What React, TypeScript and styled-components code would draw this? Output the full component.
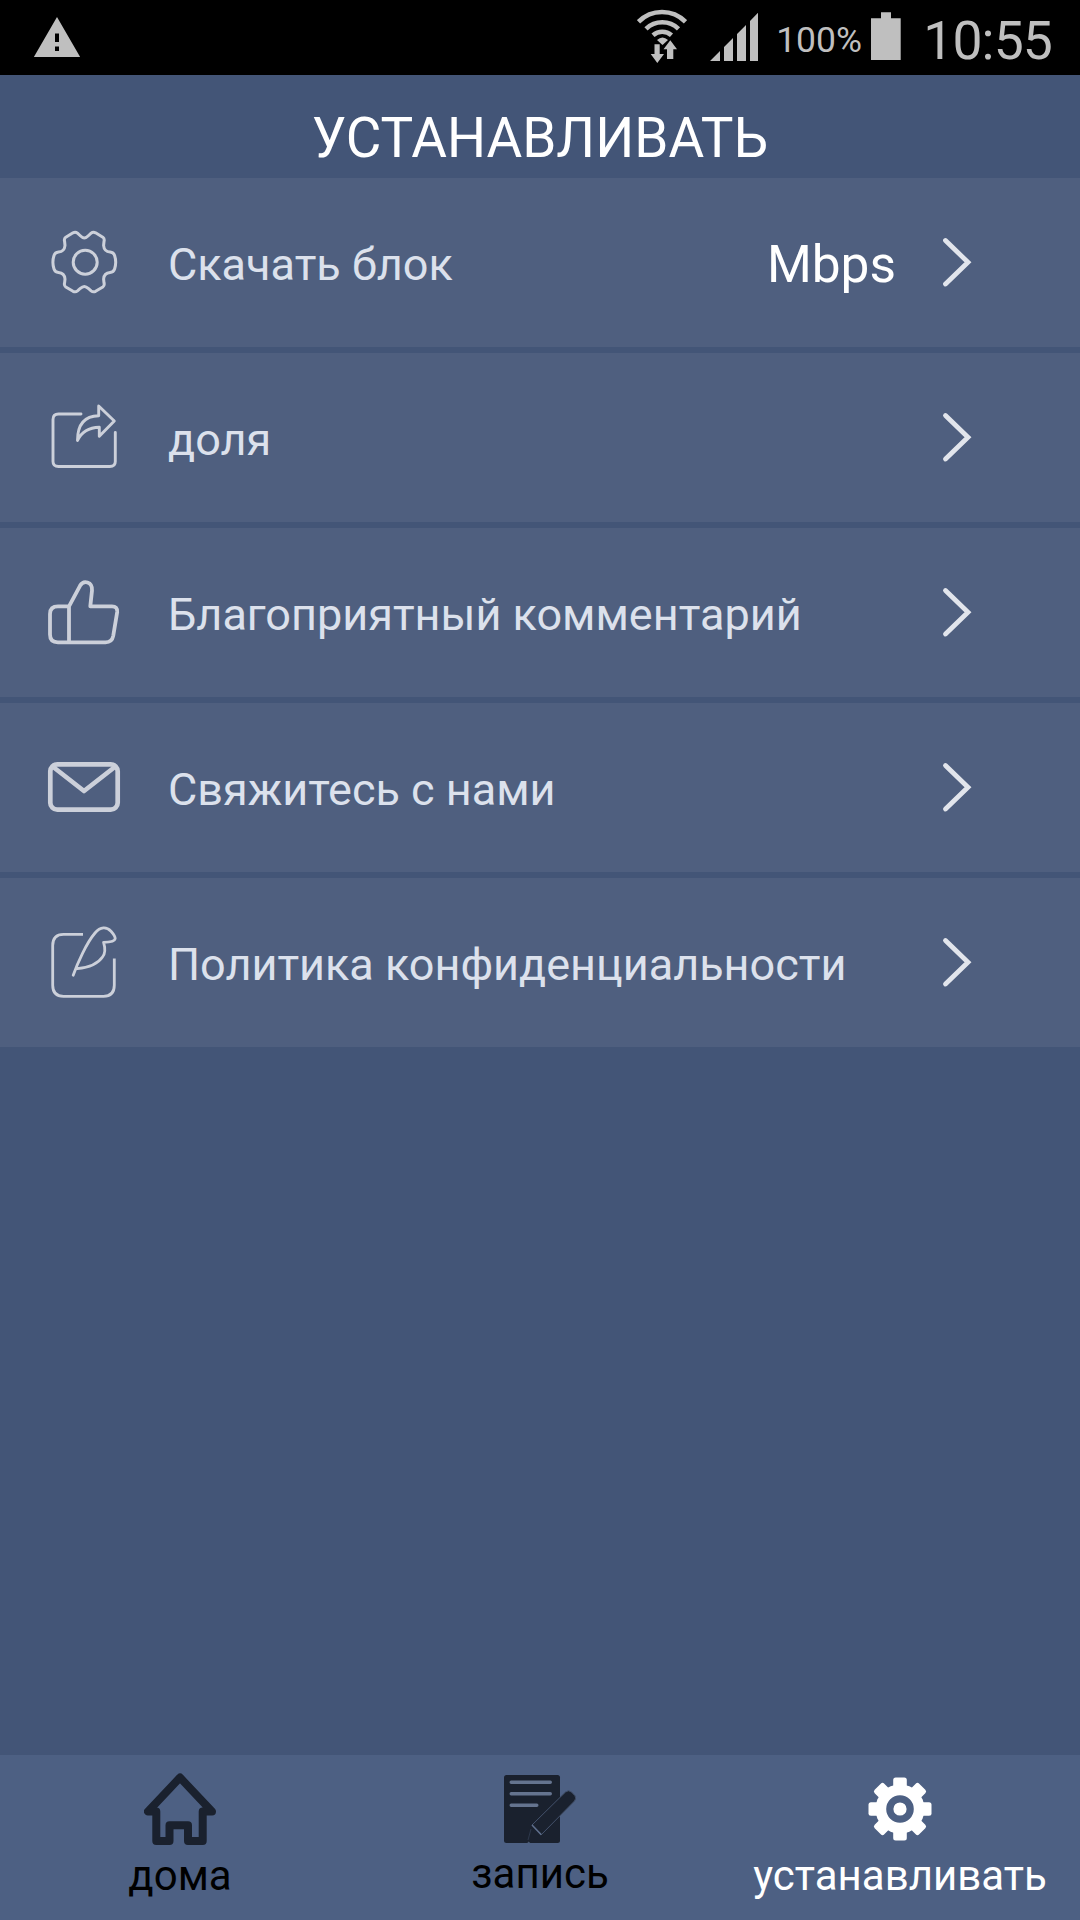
import React from "react";
import styled, { createGlobalStyle } from "styled-components";

const GlobalStyle = createGlobalStyle`
  * { box-sizing: border-box; }
  body { margin: 0; background: #435577; }
`;

const Screen = styled.div`
  display: flex;
  flex-direction: column;
  width: 1080px;
  height: 1920px;
  overflow: hidden;
  background: #435577;
  font-family: Roboto, "Noto Sans", sans-serif;
`;

const StatusBar = styled.header`
  display: flex;
  align-items: flex-start;
  height: 75px;
  flex: none;
  padding: 0 28px 0 34px;
  background: #000;
  color: #bfbfbf;
`;

const StatusIcon = styled.svg<{ $gap?: number }>`
  display: block;
  flex: none;
  margin-left: ${(p) => p.$gap ?? 0}px;
  fill: #bfbfbf;
`;

const Spacer = styled.div`
  flex: 1;
`;

const StatusText = styled.span<{ $size: number; $width: number; $line: number; $spacing?: number }>`
  flex: none;
  width: ${(p) => p.$width}px;
  font-size: ${(p) => p.$size}px;
  line-height: ${(p) => p.$line}px;
  letter-spacing: ${(p) => p.$spacing ?? 0}px;
  text-align: right;
  white-space: nowrap;
`;

const Title = styled.h1`
  flex: none;
  height: 103px;
  margin: 0;
  padding-top: 24px;
  color: #fff;
  font-size: 54.8px;
  font-weight: 400;
  line-height: 79px;
  text-align: center;
`;

const List = styled.main`
  display: flex;
  flex-direction: column;
  gap: 6px;
  flex: 1;
`;

const Row = styled.div`
  display: flex;
  align-items: center;
  height: 169px;
  padding: 0 105px 0 48px;
  background: #4f5f7f;
`;

const RowIcon = styled.svg<{ $weight: number }>`
  display: block;
  flex: none;
  width: 72px;
  height: 72px;
  margin-bottom: 1px;
  overflow: visible;
  fill: none;
  stroke: #ccd0da;
  stroke-width: ${(p) => p.$weight};
  stroke-linejoin: round;
  stroke-linecap: round;
`;

const Label = styled.span`
  flex: 1;
  margin-left: 48px;
  padding-top: 4px;
  color: #dce1ec;
  font-size: 45px;
  line-height: 60px;
  white-space: nowrap;
`;

const Value = styled.span`
  margin-right: 43px;
  padding-top: 4px;
  color: #fff;
  font-size: 51.4px;
  line-height: 60px;
`;

const Chevron = styled.svg`
  display: block;
  flex: none;
  margin-bottom: 2px;
  fill: none;
  stroke: #e2e5ec;
  stroke-width: 4.8;
  stroke-linecap: round;
`;

const TabBar = styled.nav`
  display: grid;
  grid-template-columns: repeat(3, 1fr);
  flex: none;
  height: 165px;
  background: #4d6083;
`;

const Tab = styled.div<{ $active?: boolean }>`
  display: flex;
  flex-direction: column;
  align-items: center;
  padding-top: 18px;
  color: ${(p) => (p.$active ? "#fff" : "#000")};
`;

const TabIcon = styled.svg`
  display: block;
  width: 72px;
  height: 72px;
`;

const TabLabel = styled.span<{ $line?: number }>`
  font-size: 42px;
  line-height: ${(p) => p.$line ?? 62}px;
  white-space: nowrap;
`;

const icons = {
  unit: (
    <RowIcon viewBox="0 0 72 72" $weight={3}>
      <path d="M36.300 12Q34.500 12 32 9.500L29.500 7.200Q27.500 5.600 25 6.800L17.800 11.200Q15.800 12.800 16.600 15.500L17 19.500Q16.500 25.500 10.500 26Q7 26.300 6 29.500Q3.800 36.200 6 43Q7 46.200 10.500 46.500Q16.500 47 17 53L16.600 56.800Q15.800 59.500 17.800 61L25 65.300Q27.500 66.500 29.500 64.900L32 62.700Q34.500 60.500 36.300 60.500Q38.100 60.500 40.600 62.700L43.100 64.900Q45.100 66.500 47.600 65.300L54.800 61Q56.800 59.500 56 56.800L55.600 53Q56.100 47 62.100 46.500Q65.600 46.200 66.600 43Q68.800 36.200 66.600 29.500Q65.600 26.300 62.100 26Q56.100 25.500 55.600 19.500L56 15.500Q56.800 12.800 54.800 11.200L47.600 6.800Q45.100 5.600 43.100 7.200L40.600 9.500Q38.100 12 36.300 12Z" />
      <circle cx="37.2" cy="36.2" r="12" />
    </RowIcon>
  ),
  share: (
    <RowIcon viewBox="0 0 72 72" $weight={2.9}>
      <path d="M33 13H10.500Q5 13 5 18.500V60.500Q5 65.500 10.500 65.500H61.800Q67.300 65.500 67.300 60.500V31.500" />
      <path d="M50.700 5L66.300 20L51.300 35.300V26.300C42 26.500 34 30 29.500 39.500C29.500 24 36 15 50.700 14.700Z" />
    </RowIcon>
  ),
  like: (
    <RowIcon viewBox="0 0 72 72" $weight={3.8}>
      <path d="M21 30.300H10Q2 30.300 2 38V58.500Q2 66.300 10 66.300H57.500Q64 66.300 65.200 60L69.200 36Q69.600 30.300 64 30.300H42.300L44 14.500C44.500 5.500 35.500 3.800 32 9.800L21 30.300V66.300" />
    </RowIcon>
  ),
  mail: (
    <RowIcon viewBox="0 0 72 72" $weight={4.7}>
      <rect x="2.300" y="13.300" width="67.400" height="45.400" rx="7" />
      <path d="M6.500 17L36 40L65.500 17" />
    </RowIcon>
  ),
  policy: (
    <RowIcon viewBox="0 0 72 72" $weight={2.8}>
      <path strokeLinecap="butt" d="M35 8.300H15.500Q4.700 8.300 4.700 19.500V59.300Q4.700 70.300 15.500 70.300H55.500Q66.300 70.300 66.300 59.300V32.500" />
      <path d="M25.200 49.200C29.500 37 38.500 17 47 7C52.500 .5 58.500 .6 63 5.200C65.500 8 67.300 11 67.200 12.800C66.500 16.300 60 16.300 55.600 16.300C57 21 57.300 27.500 54.500 31C49.500 38.500 41 41.500 29.200 42.700" />
    </RowIcon>
  ),
};

const rows: { icon: keyof typeof icons; label: string; value?: string }[] = [
  { icon: "unit", label: "Скачать блок", value: "Mbps" },
  { icon: "share", label: "доля" },
  { icon: "like", label: "Благоприятный комментарий" },
  { icon: "mail", label: "Свяжитесь с нами" },
  { icon: "policy", label: "Политика конфиденциальности" },
];

const HomeIcon = () => (
  <TabIcon viewBox="0 0 72 72">
    <path
      d="M36 4.600L4 38.500H12.300V68H25.500V52.300H44V68H58.700V38.500H68Z"
      fill="none"
      stroke="#1a212e"
      strokeWidth="8"
      strokeLinejoin="round"
    />
  </TabIcon>
);

const RecordIcon = () => (
  <TabIcon viewBox="0 0 72 72">
    <rect x="0" y="2" width="56" height="68" rx="2.500" fill="#1a212e" />
    <path d="M7.200 9.300H46.300M7.200 20.800H46.300M7.200 32.300H32.800" stroke="#65748f" strokeWidth="3.400" strokeLinecap="round" />
    <path
      d="M28 52L61.500 19Q64.500 16.500 67.500 19L70.800 22.500Q73 25 70.500 28L37.300 61.700Z"
      fill="#1a212e"
      stroke="#43516b"
      strokeWidth="1"
    />
    <path d="M28 52L37.300 61.700" stroke="#5f6f8c" strokeWidth="1.600" />
    <path d="M27 56L24 67" stroke="#2d384b" strokeWidth="1" />
    <path d="M23.300 70L24.500 68.400L26.300 70Z" fill="#4b5a74" />
  </TabIcon>
);

const SettingsIcon = () => (
  <TabIcon viewBox="0 0 72 72">
    <g fill="#fff">
      {[0, 45, 90, 135].map((angle) => (
        <rect key={angle} x="29.200" y="4.500" width="13.600" height="63" rx="2.500" transform={`rotate(${angle} 36 36)`} />
      ))}
      <circle cx="36" cy="36" r="24.500" />
    </g>
    <circle cx="36" cy="36" r="10.200" fill="none" stroke="#4d6083" strokeWidth="7.200" />
  </TabIcon>
);

export default function App() {
  return (
    <Screen>
      <GlobalStyle />
      <StatusBar>
        <StatusIcon width="46" height="75" viewBox="34 0 46 75">
          <path fillRule="evenodd" d="M57 17L80.200 57H33.800ZM55 33.500V42H59V33.500ZM55 46.500V51H59V46.500Z" />
        </StatusIcon>
        <Spacer />
        <StatusIcon width="50" height="75" viewBox="637 0 50 75">
          <g fill="none" stroke="#bfbfbf" strokeWidth="4.600">
            <path d="M638.500 21.800A33 33 0 0 1 685.500 21.800" />
            <path d="M646 28.800A23.500 23.500 0 0 1 678.500 28.800" />
            <path d="M653 35.300A14 14 0 0 1 671.500 35.300" />
          </g>
          <path d="M657 40Q662.500 35 668 40L662.500 45Z" />
          <path stroke="#000" strokeWidth="1" paintOrder="stroke" d="M654.500 44.300H659.700V54H664L657.300 63L650.700 54H654.500Z" />
          <path stroke="#000" strokeWidth="1" paintOrder="stroke" d="M670.300 40.300L677 49.300H673.300V59H667V49.300H663.500Z" />
        </StatusIcon>
        <StatusIcon width="48" height="75" viewBox="710 0 48 75" $gap={23}>
          <path d="M710 61L720 51V61ZM724 61V47L733 38V61ZM737 61V34L746 25V61ZM750 61V21L758 12.700V61Z" />
        </StatusIcon>
        <StatusText $size={35.5} $width={104} $line={81}>100%</StatusText>
        <StatusIcon width="30" height="75" viewBox="871 0 30 75" $gap={9}>
          <path d="M871 60V18.300H881V12.300H891V18.300H900.700V60Z" />
        </StatusIcon>
        <StatusText $size={53.5} $width={151} $line={82} $spacing={-0.9}>10:55</StatusText>
      </StatusBar>
      <Title>УСТАНАВЛИВАТЬ</Title>
      <List>
        {rows.map((row) => (
          <Row key={row.icon}>
            {icons[row.icon]}
            <Label>{row.label}</Label>
            {row.value && <Value>{row.value}</Value>}
            <Chevron width="36" height="56" viewBox="0 0 36 56">
              <path d="M6.500 6.500L29 28.300L6.500 50" />
            </Chevron>
          </Row>
        ))}
      </List>
      <TabBar>
        <Tab>
          <HomeIcon />
          <TabLabel>дома</TabLabel>
        </Tab>
        <Tab>
          <RecordIcon />
          <TabLabel $line={58}>запись</TabLabel>
        </Tab>
        <Tab $active>
          <SettingsIcon />
          <TabLabel>устанавливать</TabLabel>
        </Tab>
      </TabBar>
    </Screen>
  );
}
